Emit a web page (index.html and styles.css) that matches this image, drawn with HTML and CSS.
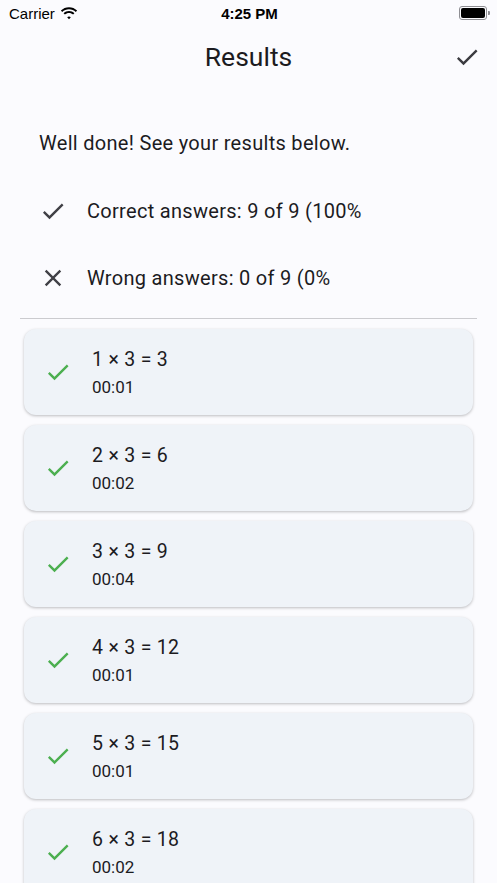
FILE: index.html
```html
<!DOCTYPE html>
<html>
<head>
<meta charset="utf-8">
<link rel="stylesheet" href="styles.css">
</head>
<body>
<div class="status">
  <div class="status-left">
    <span class="carrier">Carrier</span>
    <svg class="wifi" width="18" height="13" viewBox="0 0 18 13"><path d="M9 2.2c2.6 0 5 1 6.8 2.7l1.3-1.4C14.9 1.4 12.1.2 9 .2S3.1 1.4.9 3.5l1.3 1.4C4 3.2 6.4 2.2 9 2.2z M9 6c1.6 0 3 .6 4.1 1.6l1.3-1.4C13 4.8 11.1 4 9 4S5 4.8 3.6 6.2l1.3 1.4C6 6.6 7.4 6 9 6z M9 9.6c.7 0 1.3.3 1.8.7L9 12.3 7.2 10.3c.5-.4 1.1-.7 1.8-.7z" fill="#000"/></svg>
  </div>
  <span class="time">4:25 PM</span>
  <div class="status-right">
    <div class="battery"><div class="battery-fill"></div></div>
    <div class="battery-tip"></div>
  </div>
</div>

<header class="appbar">
  <h1 class="title">Results</h1>
  <svg class="appbar-action" width="28" height="28" viewBox="0 0 24 24"><path d="M9 16.17L4.83 12l-1.42 1.41L9 19 21 7l-1.41-1.41z" fill="#3b3b40"/></svg>
</header>

<main class="content">
  <p class="intro">Well done! See your results below.</p>
  <div class="summary-row">
    <svg class="summary-icon" width="28" height="28" viewBox="0 0 24 24"><path d="M9 16.17L4.83 12l-1.42 1.41L9 19 21 7l-1.41-1.41z" fill="#404046"/></svg>
    <span>Correct answers: 9 of 9 (100%</span>
  </div>
  <div class="summary-row">
    <svg class="summary-icon" width="28" height="28" viewBox="0 0 24 24"><path d="M19 6.41L17.59 5 12 10.59 6.41 5 5 6.41 10.59 12 5 17.59 6.41 19 12 13.41 17.59 19 19 17.59 13.41 12z" fill="#404046"/></svg>
    <span>Wrong answers: 0 of 9 (0%</span>
  </div>
  <hr class="divider">

  <div class="cards">
    <div class="card">
      <svg class="card-icon" width="28" height="28" viewBox="0 0 24 24"><path d="M9 16.17L4.83 12l-1.42 1.41L9 19 21 7l-1.41-1.41z" fill="#4caf50"/></svg>
      <div class="card-text"><div class="eq">1 × 3 = 3</div><div class="dur">00:01</div></div>
    </div>
    <div class="card">
      <svg class="card-icon" width="28" height="28" viewBox="0 0 24 24"><path d="M9 16.17L4.83 12l-1.42 1.41L9 19 21 7l-1.41-1.41z" fill="#4caf50"/></svg>
      <div class="card-text"><div class="eq">2 × 3 = 6</div><div class="dur">00:02</div></div>
    </div>
    <div class="card">
      <svg class="card-icon" width="28" height="28" viewBox="0 0 24 24"><path d="M9 16.17L4.83 12l-1.42 1.41L9 19 21 7l-1.41-1.41z" fill="#4caf50"/></svg>
      <div class="card-text"><div class="eq">3 × 3 = 9</div><div class="dur">00:04</div></div>
    </div>
    <div class="card">
      <svg class="card-icon" width="28" height="28" viewBox="0 0 24 24"><path d="M9 16.17L4.83 12l-1.42 1.41L9 19 21 7l-1.41-1.41z" fill="#4caf50"/></svg>
      <div class="card-text"><div class="eq">4 × 3 = 12</div><div class="dur">00:01</div></div>
    </div>
    <div class="card">
      <svg class="card-icon" width="28" height="28" viewBox="0 0 24 24"><path d="M9 16.17L4.83 12l-1.42 1.41L9 19 21 7l-1.41-1.41z" fill="#4caf50"/></svg>
      <div class="card-text"><div class="eq">5 × 3 = 15</div><div class="dur">00:01</div></div>
    </div>
    <div class="card">
      <svg class="card-icon" width="28" height="28" viewBox="0 0 24 24"><path d="M9 16.17L4.83 12l-1.42 1.41L9 19 21 7l-1.41-1.41z" fill="#4caf50"/></svg>
      <div class="card-text"><div class="eq">6 × 3 = 18</div><div class="dur">00:02</div></div>
    </div>
  </div>
</main>
</body>
</html>
```
FILE: styles.css
```css
html, body {
  margin: 0;
  padding: 0;
}
body {
  background: #fbfbfe;
  font-family: Roboto, "Noto Sans", sans-serif;
  color: #1c1b1f;
  width: 497px;
  height: 883px;
  overflow: hidden;
}
.status {
  height: 26px;
  display: flex;
  align-items: center;
  justify-content: space-between;
  padding: 0 7px 0 9px;
  font-family: "Liberation Sans", Arial, sans-serif;
  font-size: 15px;
  color: #000;
}
.status-left {
  display: flex;
  align-items: center;
  gap: 5px;
  width: 100px;
}
.time {
  font-weight: bold;
  font-size: 15px;
}
.status-right {
  width: 100px;
  display: flex;
  justify-content: flex-end;
  align-items: center;
}
.battery {
  width: 24px;
  height: 10px;
  border: 1px solid #8e8e93;
  border-radius: 3px;
  padding: 1px;
}
.battery-fill {
  width: 100%;
  height: 100%;
  background: #000;
  border-radius: 2px;
}
.battery-tip {
  width: 2px;
  height: 4px;
  background: #8e8e93;
  border-radius: 0 1px 1px 0;
  margin-left: 1px;
}
.appbar {
  height: 62px;
  display: flex;
  align-items: center;
  justify-content: center;
  position: relative;
}
.title {
  margin: 0 0 2px 0;
  font-weight: 400;
  font-size: 26.5px;
  color: #1c1b1f;
}
.appbar-action {
  position: absolute;
  right: 16px;
  top: 17px;
}
.content {
  padding: 0 20px;
}
.intro {
  margin: 0 0 22px 0;
  padding: 43px 0 0 19px;
  font-size: 20px;
  line-height: 24px;
  letter-spacing: 0.3px;
}
.summary-row {
  display: flex;
  align-items: center;
  height: 67px;
  padding-left: 19px;
  font-size: 20px;
  letter-spacing: 0.3px;
}
.summary-icon {
  margin-right: 20px;
}
.divider {
  margin: 7px 0 0 0;
  border: none;
  border-top: 1px solid #cbcbcf;
}
.cards {
  display: flex;
  flex-direction: column;
  gap: 10px;
  padding: 10px 4px 0 4px;
}
.card {
  height: 86px;
  flex: none;
  background: #eff3f8;
  border-radius: 12px;
  box-shadow: 0 1px 3px rgba(0,0,0,0.25);
  display: flex;
  align-items: center;
  padding-left: 20px;
  box-sizing: border-box;
}
.card-icon {
  margin-right: 20px;
}
.card-text {
  display: flex;
  flex-direction: column;
  margin-top: 4px;
}
.eq {
  font-size: 19.5px;
  letter-spacing: 0.3px;
  line-height: 26px;
}
.dur {
  font-size: 17px;
  line-height: 28px;
}
```
